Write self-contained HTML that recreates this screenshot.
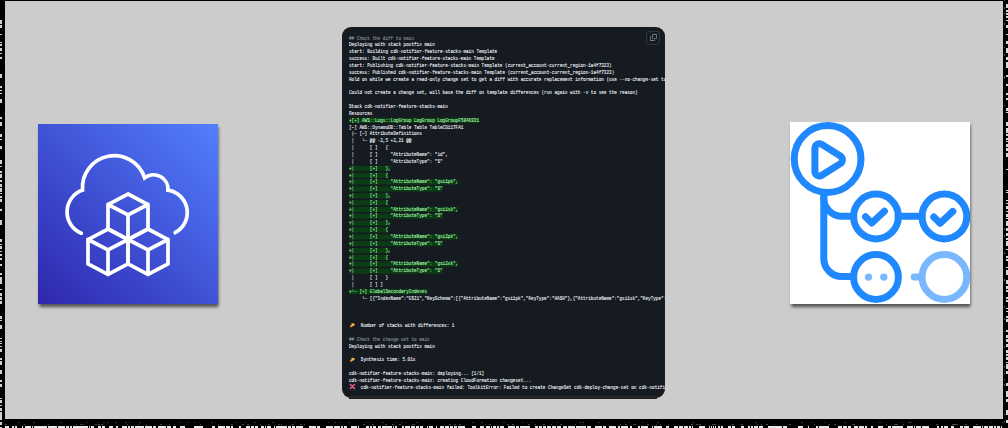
<!DOCTYPE html>
<html><head><meta charset="utf-8">
<style>
html,body{margin:0;padding:0;}
body{width:1008px;height:428px;background:#000;position:relative;overflow:hidden;font-family:"Liberation Sans",sans-serif;}
#panel{position:absolute;left:5px;top:1px;width:998px;height:418px;background:#cccccc;}
#aws{position:absolute;left:38px;top:124px;width:180px;height:180px;background:linear-gradient(45deg,#2e27ad 0%,#527fff 100%);box-shadow:0.5px 3px 3px rgba(0,0,0,0.6);}
#gha{position:absolute;left:790px;top:122px;width:180px;height:182px;background:#fff;box-shadow:0.5px 3px 3px rgba(0,0,0,0.6);overflow:hidden;}
#term{position:absolute;left:342px;top:27px;width:323px;height:371px;background:#161b22;border-radius:9px;overflow:hidden;}
#copy{position:absolute;left:304px;top:4px;width:12px;height:12px;border:1px solid #30363d;border-radius:3px;background:#161b22;}
pre{position:absolute;left:0;top:0;margin:0;font-family:"Liberation Mono",monospace;font-size:20px;line-height:30.4444px;color:#f4f8fb;white-space:pre;-webkit-text-stroke:0.35px currentColor;transform-origin:0 0;transform:scale(0.216667,0.225);}
.cm{color:#8b949e;}
.ins{color:#aff5b4;background:#0b3c15;}
.sh{position:relative;left:6.5px;}
</style></head><body>
<div id="panel"></div>
<svg id="noise" width="1008" height="428" style="position:absolute;left:0;top:0" shape-rendering="crispEdges"><path fill="#e8e8e8" d="M5 426h4v2h-4zM12 426h2v2h-2zM15 426h2v2h-2zM22 426h1v2h-1zM25 426h4v2h-4zM29 426h2v2h-2zM32 426h1v2h-1zM34 426h3v2h-3zM37 426h3v2h-3zM40 426h3v2h-3zM43 426h4v2h-4zM48 426h4v2h-4zM52 426h1v2h-1zM53 426h4v2h-4zM58 426h4v2h-4zM62 426h3v2h-3zM66 426h3v2h-3zM70 426h1v2h-1zM71 426h1v2h-1zM73 426h2v2h-2zM75 426h4v2h-4zM79 426h4v2h-4zM83 426h4v2h-4zM87 426h1v2h-1zM89 426h1v2h-1zM91 426h1v2h-1zM92 426h2v2h-2zM98 426h1v2h-1zM99 426h2v2h-2zM102 426h3v2h-3zM109 426h4v2h-4zM116 426h2v2h-2zM122 426h4v2h-4zM126 426h1v2h-1zM128 426h2v2h-2zM131 426h3v2h-3zM135 426h3v2h-3zM138 426h2v2h-2zM140 426h3v2h-3zM143 426h1v2h-1zM145 426h4v2h-4zM149 426h2v2h-2zM151 426h1v2h-1zM153 426h3v2h-3zM158 426h3v2h-3zM161 426h1v2h-1zM162 426h4v2h-4zM167 426h3v2h-3zM170 426h1v2h-1zM173 426h3v2h-3zM180 426h4v2h-4zM184 426h1v2h-1zM194 426h4v2h-4zM198 426h1v2h-1zM199 426h4v2h-4zM212 426h3v2h-3zM218 426h4v2h-4zM222 426h3v2h-3zM226 426h2v2h-2zM228 426h2v2h-2zM231 426h2v2h-2zM239 426h2v2h-2zM246 426h4v2h-4zM251 426h3v2h-3zM255 426h3v2h-3zM261 426h3v2h-3zM265 426h1v2h-1zM267 426h4v2h-4zM274 426h1v2h-1zM276 426h1v2h-1zM277 426h4v2h-4zM281 426h4v2h-4zM285 426h2v2h-2zM288 426h2v2h-2zM290 426h1v2h-1zM292 426h2v2h-2zM294 426h1v2h-1zM296 426h4v2h-4zM300 426h1v2h-1zM301 426h2v2h-2zM309 426h3v2h-3zM312 426h4v2h-4zM317 426h3v2h-3zM326 426h3v2h-3zM329 426h4v2h-4zM334 426h4v2h-4zM338 426h2v2h-2zM341 426h2v2h-2zM344 426h3v2h-3zM351 426h4v2h-4zM355 426h1v2h-1zM356 426h1v2h-1zM358 426h1v2h-1zM366 426h3v2h-3zM370 426h2v2h-2zM373 426h3v2h-3zM378 426h1v2h-1zM379 426h2v2h-2zM382 426h3v2h-3zM385 426h4v2h-4zM389 426h3v2h-3zM393 426h1v2h-1zM395 426h2v2h-2zM402 426h2v2h-2zM405 426h2v2h-2zM407 426h1v2h-1zM408 426h2v2h-2zM411 426h4v2h-4zM416 426h2v2h-2zM418 426h1v2h-1zM420 426h3v2h-3zM427 426h1v2h-1zM429 426h2v2h-2zM431 426h2v2h-2zM436 426h1v2h-1zM440 426h4v2h-4zM445 426h4v2h-4zM450 426h1v2h-1zM451 426h2v2h-2zM454 426h3v2h-3zM458 426h2v2h-2zM460 426h1v2h-1zM461 426h4v2h-4zM472 426h4v2h-4zM480 426h4v2h-4zM486 426h4v2h-4zM491 426h1v2h-1zM493 426h3v2h-3zM497 426h2v2h-2zM500 426h4v2h-4zM508 426h1v2h-1zM509 426h3v2h-3zM512 426h2v2h-2zM514 426h1v2h-1zM516 426h3v2h-3zM520 426h1v2h-1zM521 426h1v2h-1zM522 426h4v2h-4zM526 426h4v2h-4zM535 426h3v2h-3zM539 426h3v2h-3zM543 426h3v2h-3zM547 426h3v2h-3zM550 426h1v2h-1zM552 426h4v2h-4zM557 426h4v2h-4zM563 426h4v2h-4zM568 426h2v2h-2zM570 426h4v2h-4zM574 426h1v2h-1zM576 426h4v2h-4zM580 426h3v2h-3zM583 426h3v2h-3zM587 426h4v2h-4zM595 426h3v2h-3zM598 426h4v2h-4zM603 426h3v2h-3zM609 426h2v2h-2zM611 426h1v2h-1zM612 426h3v2h-3zM615 426h1v2h-1zM618 426h2v2h-2zM621 426h4v2h-4zM625 426h3v2h-3zM630 426h2v2h-2zM638 426h2v2h-2zM641 426h3v2h-3zM644 426h4v2h-4zM652 426h1v2h-1zM654 426h4v2h-4zM658 426h1v2h-1zM659 426h3v2h-3zM666 426h3v2h-3zM674 426h4v2h-4zM679 426h4v2h-4zM684 426h4v2h-4zM689 426h2v2h-2zM692 426h1v2h-1zM699 426h4v2h-4zM703 426h2v2h-2zM709 426h1v2h-1zM711 426h1v2h-1zM713 426h1v2h-1zM715 426h1v2h-1zM718 426h1v2h-1zM719 426h1v2h-1zM721 426h2v2h-2zM728 426h3v2h-3zM732 426h2v2h-2zM734 426h1v2h-1zM741 426h3v2h-3zM748 426h2v2h-2zM751 426h2v2h-2zM754 426h4v2h-4zM759 426h1v2h-1zM760 426h3v2h-3zM768 426h3v2h-3zM771 426h3v2h-3zM774 426h4v2h-4zM778 426h4v2h-4zM783 426h4v2h-4zM798 426h1v2h-1zM799 426h4v2h-4zM808 426h1v2h-1zM816 426h2v2h-2zM819 426h2v2h-2zM821 426h3v2h-3zM824 426h2v2h-2zM826 426h1v2h-1zM827 426h2v2h-2zM838 426h4v2h-4zM843 426h4v2h-4zM848 426h3v2h-3zM854 426h3v2h-3zM857 426h1v2h-1zM859 426h1v2h-1zM860 426h4v2h-4zM865 426h2v2h-2zM871 426h2v2h-2zM878 426h1v2h-1zM879 426h4v2h-4zM888 426h3v2h-3zM892 426h1v2h-1zM893 426h2v2h-2zM895 426h2v2h-2zM897 426h4v2h-4zM901 426h1v2h-1zM902 426h1v2h-1zM907 426h2v2h-2zM909 426h4v2h-4zM914 426h1v2h-1zM916 426h2v2h-2zM918 426h3v2h-3zM922 426h3v2h-3zM925 426h4v2h-4zM937 426h2v2h-2zM941 426h1v2h-1zM942 426h1v2h-1zM944 426h4v2h-4zM951 426h3v2h-3zM960 426h3v2h-3zM964 426h2v2h-2zM966 426h3v2h-3zM973 426h2v2h-2zM975 426h4v2h-4zM979 426h2v2h-2zM982 426h1v2h-1zM984 426h4v2h-4zM989 426h1v2h-1zM990 426h3v2h-3zM994 426h2v2h-2zM997 426h1v2h-1zM998 426h2v2h-2zM1001 426h1v2h-1z"/><path fill="#444" d="M5 424h2v1h-2zM24 424h1v1h-1zM48 424h1v1h-1zM76 424h1v1h-1zM80 424h2v1h-2zM83 424h1v1h-1zM95 424h2v1h-2zM98 424h2v1h-2zM101 424h2v1h-2zM127 424h1v1h-1zM138 424h1v1h-1zM146 424h1v1h-1zM160 424h2v1h-2zM169 424h1v1h-1zM200 424h1v1h-1zM218 424h1v1h-1zM231 424h2v1h-2zM242 424h2v1h-2zM247 424h2v1h-2zM260 424h1v1h-1zM268 424h2v1h-2zM278 424h2v1h-2zM281 424h1v1h-1zM292 424h2v1h-2zM300 424h2v1h-2zM304 424h1v1h-1zM363 424h2v1h-2zM372 424h2v1h-2zM385 424h2v1h-2zM392 424h2v1h-2zM399 424h2v1h-2zM412 424h1v1h-1zM413 424h2v1h-2zM429 424h1v1h-1zM449 424h2v1h-2zM454 424h2v1h-2zM459 424h2v1h-2zM485 424h1v1h-1zM489 424h2v1h-2zM507 424h1v1h-1zM508 424h1v1h-1zM512 424h2v1h-2zM528 424h2v1h-2zM535 424h1v1h-1zM543 424h2v1h-2zM551 424h1v1h-1zM560 424h2v1h-2zM575 424h1v1h-1zM582 424h1v1h-1zM620 424h1v1h-1zM625 424h2v1h-2zM633 424h1v1h-1zM634 424h2v1h-2zM647 424h2v1h-2zM656 424h1v1h-1zM660 424h1v1h-1zM668 424h1v1h-1zM691 424h2v1h-2zM696 424h2v1h-2zM699 424h2v1h-2zM712 424h2v1h-2zM714 424h2v1h-2zM718 424h1v1h-1zM732 424h2v1h-2zM741 424h2v1h-2zM757 424h1v1h-1zM761 424h1v1h-1zM766 424h2v1h-2zM774 424h1v1h-1zM789 424h2v1h-2zM814 424h1v1h-1zM828 424h2v1h-2zM834 424h2v1h-2zM852 424h2v1h-2zM854 424h1v1h-1zM886 424h1v1h-1zM894 424h2v1h-2zM896 424h2v1h-2zM903 424h1v1h-1zM936 424h2v1h-2zM952 424h2v1h-2zM954 424h2v1h-2zM956 424h2v1h-2zM965 424h2v1h-2zM976 424h2v1h-2z"/><path fill="#333" d="M18 422h2v1h-2zM33 422h2v1h-2zM60 422h2v1h-2zM87 422h1v1h-1zM97 422h1v1h-1zM103 422h2v1h-2zM107 422h2v1h-2zM115 422h2v1h-2zM125 422h2v1h-2zM129 422h1v1h-1zM139 422h2v1h-2zM179 422h1v1h-1zM187 422h1v1h-1zM194 422h1v1h-1zM211 422h2v1h-2zM215 422h1v1h-1zM235 422h1v1h-1zM245 422h1v1h-1zM254 422h2v1h-2zM272 422h2v1h-2zM295 422h1v1h-1zM328 422h1v1h-1zM334 422h2v1h-2zM340 422h1v1h-1zM348 422h2v1h-2zM366 422h1v1h-1zM369 422h1v1h-1zM382 422h2v1h-2zM395 422h1v1h-1zM401 422h2v1h-2zM405 422h1v1h-1zM416 422h2v1h-2zM472 422h2v1h-2zM481 422h2v1h-2zM503 422h2v1h-2zM522 422h1v1h-1zM531 422h1v1h-1zM557 422h1v1h-1zM579 422h2v1h-2zM582 422h2v1h-2zM598 422h2v1h-2zM629 422h1v1h-1zM642 422h1v1h-1zM657 422h2v1h-2zM692 422h2v1h-2zM755 422h2v1h-2zM801 422h2v1h-2zM811 422h1v1h-1zM824 422h1v1h-1zM844 422h2v1h-2zM879 422h2v1h-2zM902 422h1v1h-1zM908 422h2v1h-2zM910 422h2v1h-2zM991 422h1v1h-1zM1002 422h2v1h-2z"/><path fill="#d0d0d0" d="M0 20h2v1h-2zM0 21h2v3h-2zM0 25h2v3h-2zM0 34h2v1h-2zM0 42h2v1h-2zM0 44h2v2h-2zM0 48h2v3h-2zM0 53h2v1h-2zM0 57h2v2h-2zM0 74h2v1h-2zM0 75h2v3h-2zM0 86h2v2h-2zM0 90h2v1h-2zM0 93h2v1h-2zM0 99h2v1h-2zM0 100h2v3h-2zM0 117h2v2h-2zM0 122h2v3h-2zM0 125h2v1h-2zM0 134h2v3h-2zM0 139h2v1h-2zM0 146h2v1h-2zM0 147h2v1h-2zM0 148h2v1h-2zM0 160h2v1h-2zM0 161h2v3h-2zM0 166h2v1h-2zM0 171h2v2h-2zM0 174h2v1h-2zM0 175h2v3h-2zM0 180h2v2h-2zM0 184h2v3h-2zM0 188h2v1h-2zM0 189h2v3h-2zM0 193h2v1h-2zM0 196h2v2h-2zM0 199h2v3h-2zM0 209h2v2h-2zM0 220h2v2h-2zM0 222h2v3h-2zM0 239h2v3h-2zM0 244h2v1h-2zM0 246h2v3h-2zM0 251h2v1h-2zM0 254h2v2h-2zM0 258h2v2h-2zM0 264h2v2h-2zM0 273h2v2h-2zM0 277h2v3h-2zM0 280h2v1h-2zM0 281h2v3h-2zM0 289h2v1h-2zM0 293h2v3h-2zM0 297h2v3h-2zM0 301h2v3h-2zM0 316h2v3h-2zM0 320h2v1h-2zM0 325h2v3h-2zM0 328h2v1h-2zM0 338h2v1h-2zM0 341h2v1h-2zM0 343h2v1h-2zM0 346h2v1h-2zM0 349h2v3h-2zM0 358h2v2h-2zM0 361h2v3h-2zM0 364h2v1h-2zM0 370h2v1h-2zM0 371h2v3h-2zM0 380h2v2h-2zM0 384h2v3h-2zM0 398h2v1h-2zM0 400h2v3h-2zM0 405h2v1h-2zM0 408h2v2h-2zM0 410h2v1h-2zM0 412h2v2h-2zM0 414h2v3h-2zM0 417h2v2h-2zM0 419h2v1h-2zM0 422h2v3h-2zM0 427h2v1h-2z"/><path fill="#d8d8d8" d="M1006 4h2v3h-2zM1006 7h2v1h-2zM1006 10h2v2h-2zM1006 13h2v2h-2zM1006 16h2v2h-2zM1006 20h2v1h-2zM1006 25h2v3h-2zM1006 34h2v1h-2zM1006 41h2v3h-2zM1006 48h2v3h-2zM1006 51h2v1h-2zM1006 52h2v1h-2zM1006 57h2v2h-2zM1006 59h2v1h-2zM1006 62h2v3h-2zM1006 65h2v3h-2zM1006 75h2v2h-2zM1006 84h2v2h-2zM1006 93h2v2h-2zM1006 98h2v2h-2zM1006 108h2v3h-2zM1006 112h2v1h-2zM1006 122h2v2h-2zM1006 124h2v2h-2zM1006 128h2v3h-2zM1006 131h2v2h-2zM1006 134h2v2h-2zM1006 138h2v2h-2zM1006 141h2v1h-2zM1006 144h2v3h-2zM1006 148h2v3h-2zM1006 153h2v3h-2zM1006 156h2v1h-2zM1006 169h2v1h-2zM1006 190h2v1h-2zM1006 192h2v1h-2zM1006 200h2v1h-2zM1006 203h2v1h-2zM1006 206h2v3h-2zM1006 211h2v1h-2zM1006 214h2v3h-2zM1006 218h2v1h-2zM1006 221h2v2h-2zM1006 223h2v3h-2zM1006 228h2v3h-2zM1006 233h2v3h-2zM1006 238h2v2h-2zM1006 241h2v3h-2zM1006 244h2v2h-2zM1006 249h2v1h-2zM1006 256h2v2h-2zM1006 259h2v2h-2zM1006 267h2v1h-2zM1006 270h2v2h-2zM1006 272h2v3h-2zM1006 280h2v1h-2zM1006 281h2v2h-2zM1006 283h2v1h-2zM1006 286h2v2h-2zM1006 288h2v1h-2zM1006 290h2v1h-2zM1006 291h2v1h-2zM1006 297h2v2h-2zM1006 300h2v2h-2zM1006 308h2v1h-2zM1006 311h2v1h-2zM1006 316h2v2h-2zM1006 319h2v3h-2zM1006 330h2v2h-2zM1006 335h2v2h-2zM1006 337h2v1h-2zM1006 339h2v3h-2zM1006 344h2v3h-2zM1006 350h2v3h-2zM1006 354h2v1h-2zM1006 355h2v1h-2zM1006 357h2v1h-2zM1006 358h2v2h-2zM1006 362h2v1h-2zM1006 364h2v3h-2zM1006 367h2v2h-2zM1006 371h2v3h-2zM1006 383h2v3h-2zM1006 391h2v3h-2zM1006 394h2v3h-2zM1006 399h2v1h-2zM1006 400h2v2h-2zM1006 410h2v2h-2zM1006 412h2v3h-2zM1006 420h2v3h-2z"/><path fill="#555" d="M1004 0h1v1h-1zM1004 7h1v2h-1zM1004 13h1v1h-1zM1004 23h1v2h-1zM1004 47h1v1h-1zM1004 54h1v2h-1zM1004 76h1v1h-1zM1004 77h1v2h-1zM1004 105h1v1h-1zM1004 228h1v2h-1zM1004 235h1v2h-1zM1004 252h1v2h-1zM1004 279h1v2h-1zM1004 306h1v2h-1zM1004 318h1v2h-1zM1004 331h1v1h-1zM1004 346h1v2h-1zM1004 366h1v2h-1zM1004 370h1v1h-1zM1004 373h1v1h-1zM1004 379h1v1h-1zM1004 384h1v2h-1zM1004 414h1v1h-1zM1004 421h1v1h-1z"/></svg>

<div id="aws">
<svg width="180" height="180" viewBox="38 124 180 180" style="position:absolute;left:0;top:0">
<g fill="none" stroke="#fff" stroke-width="3.7" stroke-linejoin="miter" stroke-linecap="round">
<path d="M81.3 233.2 A23.06 23.06 0 0 1 82.56 190.11 A31.85 31.85 0 0 1 144.66 177.86 A14.36 14.36 0 0 1 167.92 190.14 A22.7 22.7 0 0 1 175.1 232.7"/>
<path d="M128 194 L148 204.5 L148 229 L128 239.5 L108 229 L108 204.5 Z M108 204.5 L128 215 L148 204.5 M128 215 L128 239.5"/>
<path d="M108 229 L128 239.5 L128 264 L108 274.5 L88 264 L88 239.5 Z M88 239.5 L108 250 L128 239.5 M108 250 L108 274.5"/>
<path d="M148 229 L168 239.5 L168 264 L148 274.5 L128 264 L128 239.5 Z M128 239.5 L148 250 L168 239.5 M148 250 L148 274.5"/>
</g></svg>
</div>
<div id="gha">
<svg width="180" height="182" viewBox="790 122 180 182" style="position:absolute;left:0;top:0">
<g fill="none" stroke="#2088ff" stroke-width="7" stroke-linecap="round" stroke-linejoin="round">
<circle cx="827.6" cy="159" r="33.4"/>
<path d="M819.4 148.2 L838 159.8 L819.4 171.4 Z" fill="#2088ff" stroke-width="16"/><path d="M819.4 148.2 L838 159.8 L819.4 171.4 Z" fill="#fff" stroke="#fff" stroke-width="2"/>
<path d="M823.8 193 L823.8 258.5 A18 18 0 0 0 841.8 276.5 L852 276.5"/>
<path d="M823.8 198 A18.3 18.3 0 0 0 842.1 216.3 L852 216.3"/>
<circle cx="876" cy="216.5" r="22.4"/>
<circle cx="944.4" cy="216.5" r="22.4"/>
<path d="M898 216.3 L922 216.3"/>
<circle cx="876" cy="277" r="22.4"/>
<path d="M865.5 216.8 L871.8 223 L884.4 211.2"/>
<path d="M933.8 217 L940.2 223.3 L952.8 211.4"/>
</g>
<g fill="none" stroke="#79b8ff" stroke-width="7" stroke-linecap="round">
<circle cx="944.4" cy="277" r="22.4"/>
<path d="M914.2 277 L921 277"/>
</g>
<circle cx="868.5" cy="277.1" r="3.7" fill="#79b8ff"/>
<circle cx="883.8" cy="277.1" r="3.7" fill="#79b8ff"/>
</svg>
</div>
<div id="term">
<div id="copy"><svg width="7" height="7" viewBox="0 0 16 16" style="position:absolute;left:2.6px;top:2.3px"><g fill="#8d96a0"><path d="M0 6.75C0 5.784.784 5 1.75 5h1.5a.75.75 0 0 1 0 1.5h-1.5a.25.25 0 0 0-.25.25v7.5c0 .138.112.25.25.25h7.5a.25.25 0 0 0 .25-.25v-1.5a.75.75 0 0 1 1.5 0v1.5A1.75 1.75 0 0 1 9.25 16h-7.5A1.75 1.75 0 0 1 0 14.25Z"/><path d="M5 1.75C5 .784 5.784 0 6.75 0h7.5C15.216 0 16 .784 16 1.75v7.5A1.75 1.75 0 0 1 14.25 11h-7.5A1.75 1.75 0 0 1 5 9.25Zm1.75-.25a.25.25 0 0 0-.25.25v7.5c0 .138.112.25.25.25h7.5a.25.25 0 0 0 .25-.25v-7.5a.25.25 0 0 0-.25-.25Z"/></g></svg></div>
<pre style="left:7.4px;top:7.6px"><span class="cm">## Check the diff to main</span>
Deploying with stack postfix main
start: Building cdk-notifier-feature-stacks-main Template
success: Built cdk-notifier-feature-stacks-main Template
start: Publishing cdk-notifier-feature-stacks-main Template (current_account-current_region-1a4f7323)
success: Published cdk-notifier-feature-stacks-main Template (current_account-current_region-1a4f7323)
Hold on while we create a read-only change set to get a diff with accurate replacement information (use --no-change-set to use a less accurate but faster template-only diff)

Could not create a change set, will base the diff on template differences (run again with -v to see the reason)

Stack cdk-notifier-feature-stacks-main
Resources
<span class="ins">+[+] AWS::Logs::LogGroup LogGroup LogGroupF5B46931</span>
[~] AWS::DynamoDB::Table Table TableCD117FA1
 ├─ [~] AttributeDefinitions
 │   └─ @@ -2,5 +2,21 @@
 │      [ ]   {
 │      [ ]     "AttributeName": "id",
 │      [ ]     "AttributeType": "S"
<span class="ins">+│      [+]   },</span>
<span class="ins">+│      [+]   {</span>
<span class="ins">+│      [+]     "AttributeName": "gsi1pk",</span>
<span class="ins">+│      [+]     "AttributeType": "S"</span>
<span class="ins">+│      [+]   },</span>
<span class="ins">+│      [+]   {</span>
<span class="ins">+│      [+]     "AttributeName": "gsi1sk",</span>
<span class="ins">+│      [+]     "AttributeType": "S"</span>
<span class="ins">+│      [+]   },</span>
<span class="ins">+│      [+]   {</span>
<span class="ins">+│      [+]     "AttributeName": "gsi2pk",</span>
<span class="ins">+│      [+]     "AttributeType": "S"</span>
<span class="ins">+│      [+]   },</span>
<span class="ins">+│      [+]   {</span>
<span class="ins">+│      [+]     "AttributeName": "gsi2sk",</span>
<span class="ins">+│      [+]     "AttributeType": "S"</span>
 │      [ ]   }
 │      [ ] ]
<span class="ins">+└─ [+] GlobalSecondaryIndexes</span>
     └─ [{"IndexName":"GSI1","KeySchema":[{"AttributeName":"gsi1pk","KeyType":"HASH"},{"AttributeName":"gsi1sk","KeyType":"RANGE"}],"Projection":{"ProjectionType":"ALL"}}]



    <span class="sh">Number of stacks with differences: 1</span>

<span class="cm">## Check the change-set to main</span>
Deploying with stack postfix main

    <span class="sh">Synthesis time: 5.01s</span>

cdk-notifier-feature-stacks-main: deploying... [1/1]
cdk-notifier-feature-stacks-main: creating CloudFormation changeset...
    <span class="sh">cdk-notifier-feature-stacks-main failed: ToolkitError: Failed to create ChangeSet cdk-deploy-change-set on cdk-notifier-feature-stacks-main: FAILED</span></pre>
</div>
<div id="sbar" style="position:absolute;left:349px;top:396px;width:308px;height:3px;background:linear-gradient(#2b2824,#1f1e1c);"></div>
<svg id="emo" width="1008" height="428" viewBox="0 0 1008 428" style="position:absolute;left:0;top:0">
<defs><linearGradient id="sp" x1="0" y1="1" x2="1" y2="0"><stop offset="0" stop-color="#f07a30"/><stop offset="1" stop-color="#ffd050"/></linearGradient></defs>
<g fill="url(#sp)">
<path d="M351.2 323.6 Q353.5 322.4 354.9 324.6 Q354.2 326.4 352.6 326.2 L351.4 327.3 Q349.6 327.6 349.9 326 Q350.6 325.2 351.6 325 Z"/>
<path d="M351.2 358.1 Q353.5 356.9 354.9 359.1 Q354.2 360.9 352.6 360.7 L351.4 361.8 Q349.6 362.1 349.9 360.5 Q350.6 359.7 351.6 359.5 Z"/>
</g>
<g stroke="#ec5a86" stroke-width="1.4" stroke-linecap="round">
<path d="M350.4 384.4 L354.5 388.5 M354.5 384.4 L350.4 388.5"/>
</g>
</svg>
</body></html>
